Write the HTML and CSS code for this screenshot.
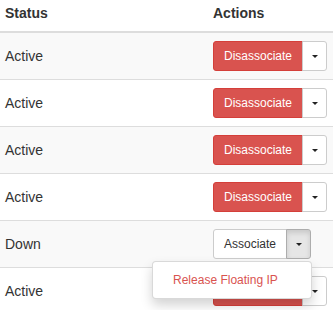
FILE: index.html
```html
<!DOCTYPE html>
<html>
<head>
<meta charset="utf-8">
<link rel="stylesheet" href="styles.css">
</head>
<body>
<table class="tbl">
  <colgroup><col class="c-status"><col class="c-actions"></colgroup>
  <thead>
    <tr><th>Status</th><th>Actions</th></tr>
  </thead>
  <tbody>
    <tr><td>Active</td><td><div class="bgroup"><button class="btn btn-danger">Disassociate</button><button class="btn btn-default toggle"><span class="caret"></span></button></div></td></tr>
    <tr><td>Active</td><td><div class="bgroup"><button class="btn btn-danger">Disassociate</button><button class="btn btn-default toggle"><span class="caret"></span></button></div></td></tr>
    <tr><td>Active</td><td><div class="bgroup"><button class="btn btn-danger">Disassociate</button><button class="btn btn-default toggle"><span class="caret"></span></button></div></td></tr>
    <tr><td>Active</td><td><div class="bgroup"><button class="btn btn-danger">Disassociate</button><button class="btn btn-default toggle"><span class="caret"></span></button></div></td></tr>
    <tr><td>Down</td><td><div class="bgroup open"><button class="btn btn-default">Associate</button><button class="btn btn-default toggle active"><span class="caret"></span></button>
      <ul class="menu"><li><a class="menu-item">Release Floating IP</a></li></ul></div></td></tr>
    <tr><td>Active</td><td><div class="bgroup"><button class="btn btn-danger">Disassociate</button><button class="btn btn-default toggle"><span class="caret"></span></button></div></td></tr>
  </tbody>
</table>
</body>
</html>
```
FILE: styles.css
```css
html, body {
  margin: 0;
  padding: 0;
  background: #fff;
}
body {
  font-family: "Liberation Sans", Arial, sans-serif;
  font-size: 14px;
  line-height: 20px;
  color: #333;
  overflow: hidden;
}
.tbl {
  border-collapse: collapse;
  border-spacing: 0;
  table-layout: fixed;
  width: 345px;
  margin: -5px 0 0 -3px;
}
.c-status { width: 208px; }
.tbl th {
  text-align: left;
  font-weight: bold;
  padding: 8px;
  border-bottom: 2px solid #ddd;
  vertical-align: bottom;
}
.tbl td {
  padding: 8px;
  border-top: 1px solid #ddd;
  vertical-align: middle;
}
.tbl tbody tr:nth-child(odd) td { background: #f9f9f9; }
.bgroup {
  position: relative;
  display: inline-flex;
  vertical-align: middle;
}
.btn {
  font-family: "Liberation Sans", Arial, sans-serif;
  font-size: 12px;
  line-height: 18px;
  padding: 5px 10px;
  border: 1px solid transparent;
  border-radius: 3px;
  margin: 0;
  cursor: pointer;
  box-sizing: border-box;
  height: 30px;
}
.btn-danger {
  background: #d9534f;
  border-color: #d43f3a;
  color: #fff;
  border-top-right-radius: 0;
  border-bottom-right-radius: 0;
}
.btn-default {
  background: #fff;
  border-color: #ccc;
  color: #333;
  border-top-right-radius: 0;
  border-bottom-right-radius: 0;
}
.toggle {
  margin-left: -1px;
  padding: 0 8px;
  width: 25px;
  border-radius: 0 3px 3px 0;
  display: flex;
  align-items: center;
  justify-content: center;
}
.toggle.active {
  background: #e6e6e6;
  border-color: #adadad;
  box-shadow: inset 0 3px 5px rgba(0,0,0,.125);
}
.caret {
  display: block;
  width: 0;
  height: 0;
  border-top: 3px solid #222;
  border-left: 3px solid transparent;
  border-right: 3px solid transparent;
}
.menu {
  position: absolute;
  top: 100%;
  right: -1px;
  margin: 2px 0 0;
  padding: 5px 0;
  list-style: none;
  min-width: 160px;
  box-sizing: border-box;
  background: #fff;
  border: 1px solid rgba(0,0,0,.15);
  border-radius: 4px;
  box-shadow: 0 6px 12px rgba(0,0,0,.175);
  z-index: 10;
}
.menu-item {
  display: block;
  padding: 3px 20px 3px 20px;
  font-size: 12px;
  line-height: 20px;
  color: #d9534f;
  white-space: nowrap;
}
```
